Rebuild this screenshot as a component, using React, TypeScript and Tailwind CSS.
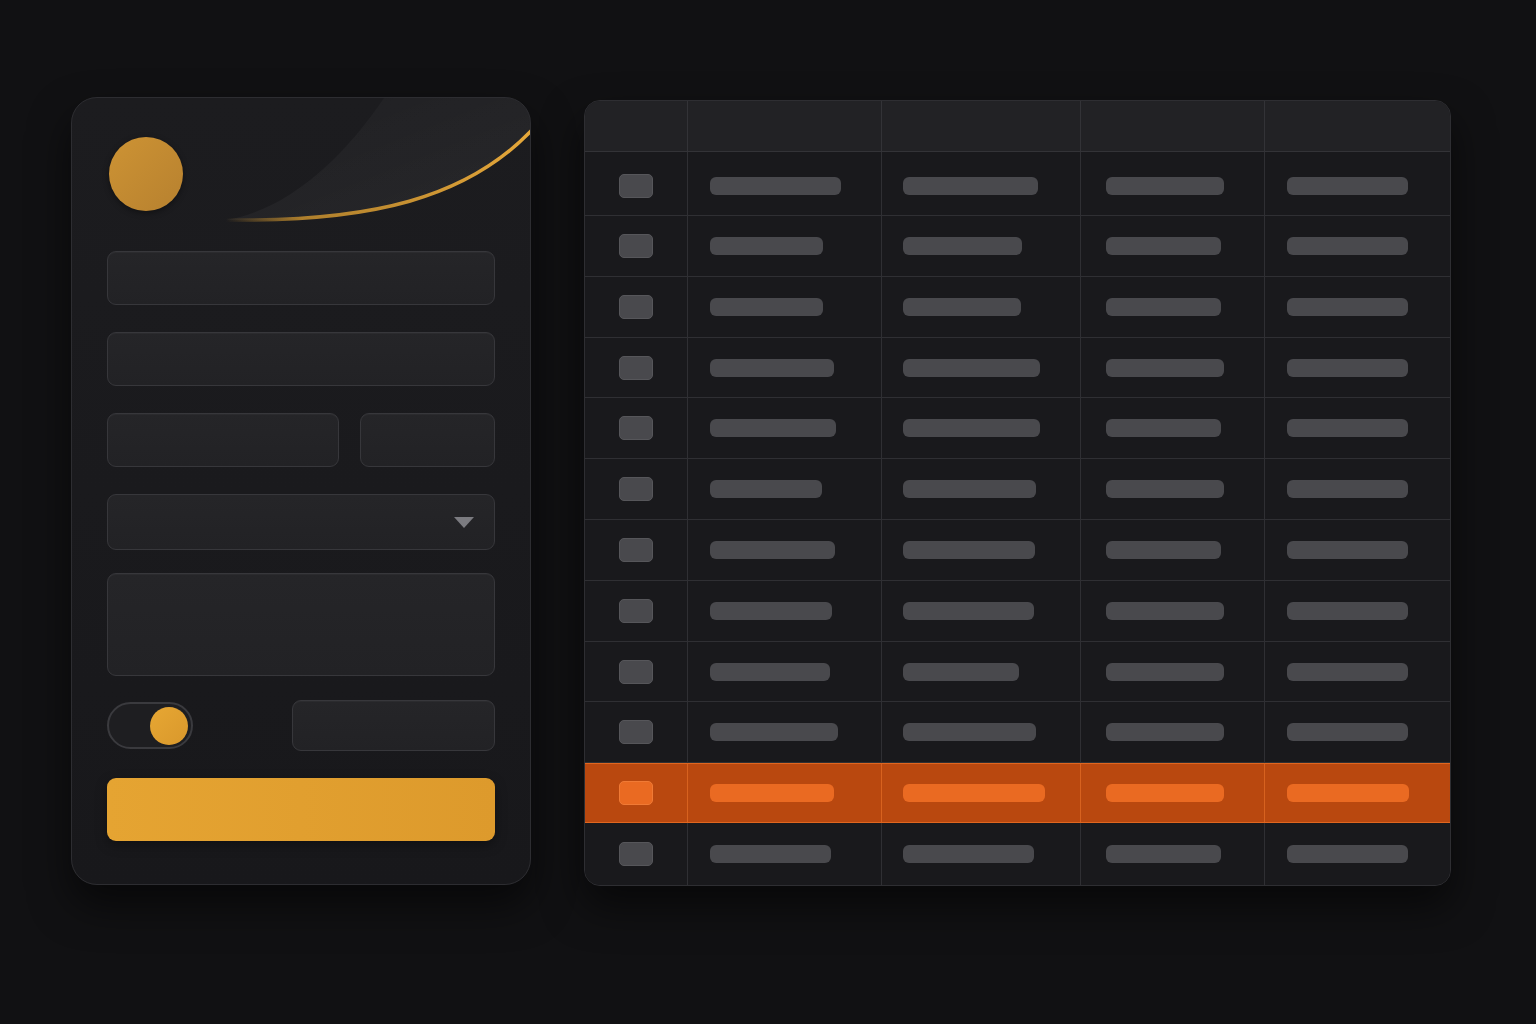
import React from "react";

const cols = [
  "w-[103px]",
  "w-[194px]",
  "w-[200px]",
  "w-[184px]",
  "w-[185px]",
];

const pads = ["", "pl-[22px]", "pl-[21px]", "pl-[25px]", "pl-[22px]"];

const rows: { h: string; bars: number[]; active?: boolean; first?: boolean }[] = [
  { h: "h-[64px]", bars: [131, 135, 118, 121], first: true },
  { h: "h-[61px]", bars: [113, 119, 115, 121] },
  { h: "h-[61px]", bars: [113, 118, 115, 121] },
  { h: "h-[60px]", bars: [124, 137, 118, 121] },
  { h: "h-[61px]", bars: [126, 137, 115, 121] },
  { h: "h-[61px]", bars: [112, 133, 118, 121] },
  { h: "h-[61px]", bars: [125, 132, 115, 121] },
  { h: "h-[61px]", bars: [122, 131, 118, 121] },
  { h: "h-[60px]", bars: [120, 116, 118, 121] },
  { h: "h-[61px]", bars: [128, 133, 118, 121] },
  { h: "h-[60px]", bars: [124, 142, 118, 122], active: true },
  { h: "h-[62px]", bars: [121, 131, 115, 121] },
];

function Field({ className = "" }: { className?: string }) {
  return (
    <div
      className={`rounded-[9px] border border-[#37373b] bg-gradient-to-b from-[#252528] to-[#222225] shadow-[inset_0_1px_0_rgba(255,255,255,0.03)] ${className}`}
    />
  );
}

function FormCard() {
  return (
    <div className="relative w-[460px] h-[788px] rounded-[26px] border border-[#2d2d31] bg-gradient-to-b from-[#1c1c1f] to-[#18181b] shadow-[0_20px_40px_rgba(0,0,0,0.55)] overflow-hidden px-[35px] flex flex-col">
      <svg
        className="absolute left-0 top-0"
        width="460"
        height="130"
        viewBox="0 0 460 130"
      >
        <defs>
          <linearGradient id="sheen" x1="0" y1="0" x2="1" y2="1">
            <stop offset="0" stopColor="#ffffff" stopOpacity="0.015" />
            <stop offset="1" stopColor="#ffffff" stopOpacity="0.055" />
          </linearGradient>
          <linearGradient id="gold" x1="0" y1="0" x2="1" y2="0">
            <stop offset="0" stopColor="#c8902e" stopOpacity="0" />
            <stop offset="0.25" stopColor="#c8902e" stopOpacity="0.85" />
            <stop offset="1" stopColor="#e6a83a" />
          </linearGradient>
        </defs>
        <path
          d="M312 0 C 270 62, 215 112, 154 122 C 300 124, 395 100, 460 32 L 460 0 Z"
          fill="url(#sheen)"
        />
        <path
          d="M154 122 C 300 124, 395 100, 460 32"
          fill="none"
          stroke="url(#gold)"
          strokeWidth="3.5"
        />
      </svg>

      <div className="relative mt-[39px] ml-[2px] w-[74px] h-[74px] rounded-full bg-gradient-to-br from-[#cd9334] to-[#b7812f] shadow-[0_2px_6px_rgba(0,0,0,0.4)]" />

      <Field className="mt-[40px] h-[54px]" />
      <Field className="mt-[27px] h-[54px]" />
      <div className="mt-[27px] flex gap-[21px]">
        <Field className="w-[232px] h-[54px]" />
        <Field className="flex-1 h-[54px]" />
      </div>
      <div className="mt-[27px] relative h-[56px] rounded-[9px] border border-[#37373b] bg-gradient-to-b from-[#252528] to-[#222225] flex items-center justify-end pr-[19px]">
        <svg width="22" height="13" viewBox="0 0 22 13">
          <path d="M1 1 L21 1 L11 12 Z" fill="#7b7b80" />
        </svg>
      </div>
      <Field className="mt-[23px] h-[103px]" />

      <div className="mt-[24px] flex items-center justify-between">
        <div className="w-[86px] h-[47px] rounded-full border-2 border-[#3a3a3e] bg-[#1e1e21] flex items-center justify-end pr-[3px]">
          <div className="w-[38px] h-[38px] rounded-full bg-gradient-to-br from-[#e7a733] to-[#d9982c]" />
        </div>
        <Field className="w-[203px] h-[51px]" />
      </div>

      <div className="mt-[27px] h-[63px] rounded-[9px] bg-gradient-to-r from-[#e5a432] to-[#dd9a2c] shadow-[0_4px_12px_rgba(0,0,0,0.35)]" />
    </div>
  );
}

function DataTable() {
  return (
    <div className="mt-[3px] w-[867px] rounded-[16px] border border-[#2e2e32] bg-[#19191c] overflow-hidden shadow-[0_20px_40px_rgba(0,0,0,0.55)]">
      <div className="flex h-[51px] bg-[#222225] border-b border-[#333337]">
        {cols.map((c, i) => (
          <div
            key={i}
            className={`${c} h-full ${i < cols.length - 1 ? "border-r border-[#333337]" : ""}`}
          />
        ))}
      </div>
      {rows.map((r, ri) => {
        const last = ri === rows.length - 1;
        const line = r.active ? "border-[#d8621f]" : "border-[#2f2f33]";
        return (
          <div
            key={ri}
            className={`flex ${r.h} ${r.active ? "bg-[#b9480f] border-y border-[#e0661f]" : "bg-[#19191c]"} ${!last && !r.active ? "border-b border-[#2f2f33]" : ""}`}
          >
            {cols.map((c, ci) => (
              <div
                key={ci}
                className={`${c} h-full flex items-center ${r.first ? "pt-[5px]" : ""} ${ci === 0 ? "justify-center" : pads[ci]} ${ci < cols.length - 1 ? `border-r ${line}` : ""}`}
              >
                {ci === 0 ? (
                  <div
                    className={`w-[34px] h-[24px] rounded-[5px] border ${r.active ? "bg-[#ea6a22] border-[#f07a35]" : "bg-[#49494d] border-[#56565a]"}`}
                  />
                ) : (
                  <div
                    className={`h-[18px] rounded-[6px] ${r.active ? "bg-[#ea6a22]" : "bg-[#49494d]"}`}
                    style={{ width: r.bars[ci - 1] }}
                  />
                )}
              </div>
            ))}
          </div>
        );
      })}
    </div>
  );
}

export default function App() {
  return (
    <div className="w-[1536px] h-[1024px] bg-[#111113] flex items-start pl-[71px] pt-[97px] gap-[53px]">
      <FormCard />
      <DataTable />
    </div>
  );
}
